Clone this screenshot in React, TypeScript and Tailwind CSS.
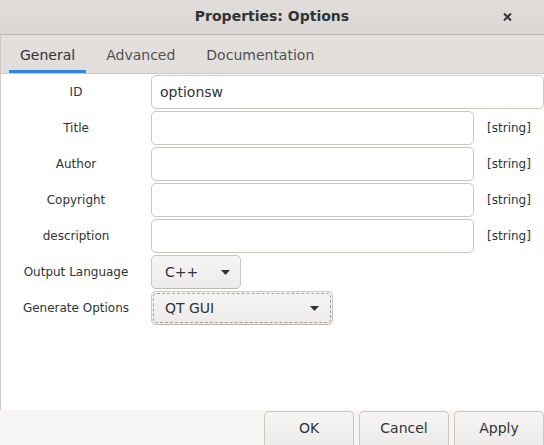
import React from 'react';

const font = { fontFamily: '"DejaVu Sans", Verdana, sans-serif' };

function Arrow() {
	return (
		<svg width="9" height="5" viewBox="0 0 9 5" className="shrink-0">
			<path d="M0 0 L9 0 L4.5 5 Z" fill="#2e3436" />
		</svg>
	);
}

function Entry({ value = '', wide = false }: { value?: string; wide?: boolean }) {
	return (
		<div
			className={`h-[34px] rounded-[5px] border border-[#cdc7c2] bg-white flex items-center pl-[8px] text-[14px] text-[#2e3436] ${wide ? 'col-span-2' : ''}`}
		>
			{value}
		</div>
	);
}

function Combo({ value, width, pr, focused = false }: { value: string; width: string; pr: string; focused?: boolean }) {
	return (
		<div className={`h-[34px] ${width} rounded-[5px] border border-[#cdc7c2] border-b-[#bfb8b1] bg-gradient-to-b from-[#f6f5f4] to-[#edebe9] p-[2px]`}>
			<div
				className={`h-full rounded-[3px] flex items-center justify-between pl-[11px] ${pr} text-[14px] text-[#2e3436] ${focused ? 'outline-1 outline-dashed outline-[#2e3436]/40' : ''}`}
			>
				<span>{value}</span>
				<Arrow />
			</div>
		</div>
	);
}

const Label = ({ children }: { children: React.ReactNode }) => (
	<div className="h-[34px] flex items-center justify-center text-[12px] text-[#2e3436]">{children}</div>
);

const Hint = () => (
	<div className="h-[34px] flex items-center justify-center text-[12px] text-[#2e3436]">[string]</div>
);

export default function App() {
	const stringRows = ['Title', 'Author', 'Copyright', 'description'];

	return (
		<div className="w-[544px] h-[445px] overflow-hidden bg-[#f6f5f4] flex flex-col" style={font}>
			{/* title bar */}
			<div className="h-[35px] shrink-0 relative flex items-center justify-center pb-[2px] border-b border-[#bfb8b1] bg-gradient-to-b from-[#e1dedb] to-[#dad6d2]">
				<span className="text-[14px] font-bold text-[#2e3436]">Properties: Options</span>
				<svg width="9" height="8" viewBox="0 0 9 8" className="absolute left-[503px] top-[13px]">
					<path d="M1 0.5 L8 7.5 M8 0.5 L1 7.5" stroke="#2e3436" strokeWidth="2" />
				</svg>
			</div>

			{/* notebook */}
			<div className="flex-1 flex flex-col border-l border-[#cdc7c2]">
				<div className="h-[39px] shrink-0 flex items-end gap-[9px] pl-[8px] bg-[#e1dedb] border-b border-[#cdc7c2]">
					<div className="h-[38px] px-[11px] flex items-center text-[14px] text-[#2e3436] border-b-[3px] border-[#3584e4] pt-[5px]">
						General
					</div>
					<div className="h-[38px] px-[11px] flex items-center text-[14px] text-[#2e3436]/85 pt-[2px]">Advanced</div>
					<div className="h-[38px] px-[11px] flex items-center text-[14px] text-[#2e3436]/85 pt-[2px]">Documentation</div>
				</div>

				<div className="h-[336px] shrink-0 bg-white pt-[1px]">
					<div className="grid grid-cols-[150px_323px_70px] gap-y-[2px]">
						<Label>ID</Label>
						<Entry value="optionsw" wide />
						{stringRows.map((r) => (
							<React.Fragment key={r}>
								<Label>{r}</Label>
								<Entry />
								<Hint />
							</React.Fragment>
						))}
						<Label>Output Language</Label>
						<div className="col-span-2">
							<Combo value="C++" width="w-[90px]" pr="pr-[8px]" />
						</div>
						<Label>Generate Options</Label>
						<div className="col-span-2">
							<Combo value="QT GUI" width="w-[182px]" pr="pr-[11px]" focused />
						</div>
					</div>
				</div>
			</div>

			{/* action area */}
			<div className="h-[35px] shrink-0 flex justify-end items-end gap-[5px]">
				{['OK', 'Cancel', 'Apply'].map((b) => (
					<div
						key={b}
						className="w-[90px] h-[34px] rounded-t-[5px] border border-b-0 border-[#cdc7c2] bg-gradient-to-b from-[#f6f5f4] to-[#edebe9] flex items-center justify-center text-[14px] text-[#2e3436]"
					>
						{b}
					</div>
				))}
			</div>
		</div>
	);
}
